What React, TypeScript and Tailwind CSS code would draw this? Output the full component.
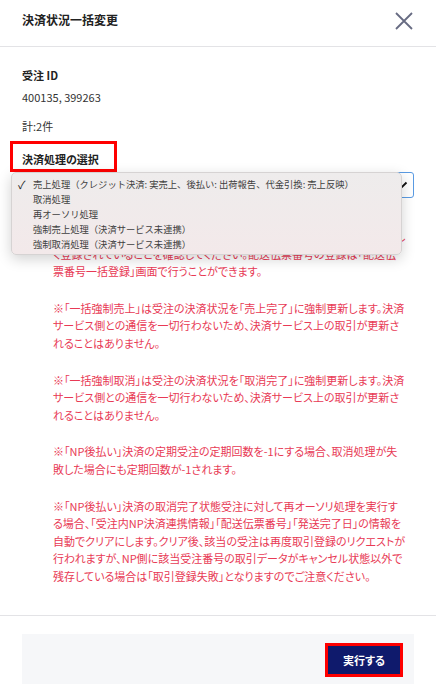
import React from 'react';

const options = [
  '売上処理（クレジット決済: 実売上、後払い: 出荷報告、代金引換: 売上反映）',
  '取消処理',
  '再オーソリ処理',
  '強制売上処理（決済サービス未連携）',
  '強制取消処理（決済サービス未連携）',
];

// notes are split into the lines shown in the screenshot
const notes: string[][] = [
  [
    '※「売上処理」をNP後払いの受注に対して行う場合は、配送伝票番号が正し',
    'く登録されていることを確認してください。配送伝票番号の登録は「配送伝',
    '票番号一括登録」画面で行うことができます。',
  ],
  [
    '※「一括強制売上」は受注の決済状況を「売上完了」に強制更新します。決済',
    'サービス側との通信を一切行わないため、決済サービス上の取引が更新さ',
    'れることはありません。',
  ],
  [
    '※「一括強制取消」は受注の決済状況を「取消完了」に強制更新します。決済',
    'サービス側との通信を一切行わないため、決済サービス上の取引が更新さ',
    'れることはありません。',
  ],
  [
    '※「NP後払い」決済の定期受注の定期回数を-1にする場合、取消処理が失',
    '敗した場合にも定期回数が-1されます。',
  ],
  [
    '※「NP後払い」決済の取消完了状態受注に対して再オーソリ処理を実行す',
    'る場合、「受注内NP決済連携情報」「配送伝票番号」「発送完了日」の情報を',
    '自動でクリアにします。クリア後、該当の受注は再度取引登録のリクエストが',
    '行われますが、NP側に該当受注番号の取引データがキャンセル状態以外で',
    '残存している場合は「取引登録失敗」となりますのでご注意ください。',
  ],
];

export default function App() {
  return (
    <div
      className="flex flex-col h-screen overflow-hidden bg-white text-[#222]"
      style={{ fontFamily: '"Noto Sans CJK JP", "Noto Sans", sans-serif', fontFeatureSettings: '"palt"' }}
    >
      {/* Header */}
      <div className="flex h-[47px] shrink-0 items-start justify-between border-b border-[#e3e3e6] pl-[22px] pr-[23px] pt-[11px]">
        <h2 className="text-[12px] font-bold leading-[17px]">決済状況一括変更</h2>
        <svg width="18" height="18" viewBox="0 0 18 18" className="mt-[1px]">
          <path d="M1 1 L17 17 M17 1 L1 17" stroke="#676b82" strokeWidth="1.8" fill="none" />
        </svg>
      </div>

      {/* Body */}
      <div className="flex-1 overflow-hidden px-[22px] pt-[20px]">
        <div className="text-[11px] font-bold leading-[17px]">受注 ID</div>
        <div className="mt-[5px] text-[11px] leading-[17px] text-[#333]">400135, 399263</div>
        <div className="mt-[12px] text-[11px] leading-[17px] text-[#333]">計:2件</div>

        <div className="mt-[6px] -ml-[12px] flex h-[31px] w-[107px] border-[3px] border-[#ff0000] pl-[9px] pt-[7px]">
          <span className="text-[11px] font-bold leading-[17px]">決済処理の選択</span>
        </div>

        <div className="relative">
          <div className="flex h-[26px] w-full items-center justify-end rounded-[3px] border-[1.5px] border-[#5a9be3] pr-[5px]">
            <svg width="12" height="8" viewBox="0 0 12 8">
              <path d="M1.5 1.5 L6 6 L10.5 1.5" stroke="#111" strokeWidth="1.8" fill="none" />
            </svg>
          </div>

          {/* open native menu */}
          <div
            className="absolute left-[-11px] top-0 z-10 h-[83px] w-[391px] rounded-[5px] border border-[#d6d3d3] bg-gradient-to-b from-[#eeecec] to-[#f3e9ea] pt-[4px] shadow-[0_4px_14px_rgba(0,0,0,0.18)]"
            style={{ fontFeatureSettings: 'normal' }}
          >
            {options.map((o, i) => (
              <div key={o} className="flex h-[14.8px] items-center text-[9.3px] leading-[14px] text-[#404040]">
                <span className="w-[21px] shrink-0 pl-[6px] text-[11px] text-[#222]">{i === 0 ? '✓' : ''}</span>
                <span className="whitespace-nowrap">{o}</span>
              </div>
            ))}
          </div>
        </div>

        <div className="mt-[30px] flex flex-col gap-[19px] pl-[31px] text-[11px] leading-[17.6px] text-[#e83a55]">
          {notes.map((lines, i) => (
            <p key={i}>
              {lines.map((l) => (
                <span key={l} className="block whitespace-nowrap">{l}</span>
              ))}
            </p>
          ))}
        </div>
      </div>

      {/* Footer */}
      <div className="h-[69px] shrink-0 border-t border-[#e3e3e6] px-[22px] pt-[18px]">
        <div className="flex h-[56px] justify-end bg-[#f6f7f9] pr-[11px] pt-[9px]">
          <div className="h-[34px] border-[3px] border-[#ff0000]">
            <button type="button" className="h-[28px] w-[72px] bg-[#0f1a6c] text-[11px] font-bold text-white">
              実行する
            </button>
          </div>
        </div>
      </div>
    </div>
  );
}
